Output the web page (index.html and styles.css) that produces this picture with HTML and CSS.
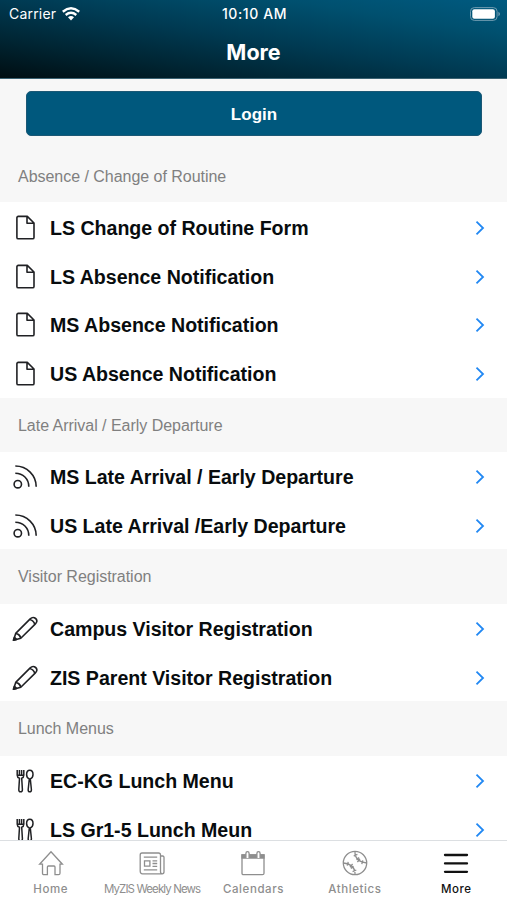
FILE: index.html
```html
<!DOCTYPE html>
<html lang="en">
<head>
    <meta charset="UTF-8">
    <meta name="viewport" content="width=device-width, initial-scale=1.0">
    <title>More</title>
    <link rel="stylesheet" href="styles.css">
</head>
<body>

    <!-- Shared icons -->
    <svg class="icon-defs" width="0" height="0">
        <symbol id="icon-file" viewBox="0 0 26 26">
            <path d="M6.3 1.4H15.3L22 8V22.4Q22 23.8 20.6 23.8H6.3Q4.9 23.8 4.9 22.4V2.8Q4.9 1.4 6.3 1.4Z M15 1.6V8.2H21.8"/>
        </symbol>
        <symbol id="icon-feed" viewBox="0 0 26 26">
            <circle cx="5.8" cy="20.2" r="3.7"/>
            <path d="M3.3 9.2C11 9.2 16.8 14.8 16.8 22.7M3.3 2C15 2 24.2 11.3 24.2 22.7"/>
        </symbol>
        <symbol id="icon-pencil" viewBox="0 0 26 26">
            <path d="M1.5 24.3L3.7 17.4L18.2 2.9Q20.2 1 22.4 1.8Q25 3 24.9 5.2Q24.7 6.6 23.4 7.9L8.8 22.2Z M3.7 17.4Q7.8 18.2 8.8 22.2M17.6 3.5Q21.8 4.4 22.8 8.5"/>
            <path class="solid" d="M1.5 24.3L2.4 21.3L4.5 23.4Z"/>
        </symbol>
        <symbol id="icon-food" viewBox="0 0 26 26">
            <path d="M5.2 2V7.2Q5.2 9.4 7.5 10.2L6.8 21.5Q6.7 23.8 8.6 23.8Q10.5 23.8 10.4 21.5L9.7 10.2Q11.8 9.4 11.8 7.2V2M7.4 2V7.7M9.6 2V7.7M5.2 7.3H11.8"/>
            <path d="M17.3 11Q14.6 9.8 14.6 6.5Q14.6 2.2 17.8 2.2Q21 2.2 21 6.5Q21 9.8 18.3 11L19.4 21.5Q19.5 23.8 17.8 23.8Q16 23.8 16.2 21.5Z"/>
        </symbol>
        <symbol id="icon-chevron" viewBox="0 0 10 16">
            <path d="M1.5 1.7L8 8L1.5 14.3"/>
        </symbol>
    </svg>

    <header class="header">
        <div class="status-bar">
            <div class="carrier">
                <span>Carrier</span>
                <svg class="wifi" viewBox="0 0 18 14">
                    <path d="M.8 4.7Q9-2 17.2 4.7M3.7 8Q9 3.7 14.3 8" fill="none" stroke="#fff" stroke-width="2.4"/>
                    <path d="M6 10.2Q9 7.8 12 10.2L9 13.5Z" fill="#fff"/>
                </svg>
            </div>
            <div class="time">10:10 AM</div>
            <svg class="battery" viewBox="0 0 30 14">
                <rect x=".5" y=".6" width="26.6" height="12.8" rx="3.8" fill="none" stroke="#6e9bb0"/>
                <rect x="2.3" y="2.3" width="22.6" height="9.4" rx="2" fill="#fff"/>
                <path d="M28.4 4.8Q30 5.6 30 7T28.4 9.2Z" fill="#6e9bb0"/>
            </svg>
        </div>
        <h1 class="title">More</h1>
    </header>

    <main class="content">
        <div class="login">
            <button class="login-button">Login</button>
        </div>

        <h2 class="section-title first">Absence / Change of Routine</h2>
        <a class="row"><svg class="icon"><use href="#icon-file"/></svg><span class="label">LS Change of Routine Form</span><svg class="chevron"><use href="#icon-chevron"/></svg></a>
        <a class="row"><svg class="icon"><use href="#icon-file"/></svg><span class="label">LS Absence Notification</span><svg class="chevron"><use href="#icon-chevron"/></svg></a>
        <a class="row"><svg class="icon"><use href="#icon-file"/></svg><span class="label">MS Absence Notification</span><svg class="chevron"><use href="#icon-chevron"/></svg></a>
        <a class="row"><svg class="icon"><use href="#icon-file"/></svg><span class="label">US Absence Notification</span><svg class="chevron"><use href="#icon-chevron"/></svg></a>

        <h2 class="section-title">Late Arrival / Early Departure</h2>
        <a class="row"><svg class="icon"><use href="#icon-feed"/></svg><span class="label">MS Late Arrival / Early Departure</span><svg class="chevron"><use href="#icon-chevron"/></svg></a>
        <a class="row"><svg class="icon"><use href="#icon-feed"/></svg><span class="label">US Late Arrival /Early Departure</span><svg class="chevron"><use href="#icon-chevron"/></svg></a>

        <h2 class="section-title">Visitor Registration</h2>
        <a class="row"><svg class="icon"><use href="#icon-pencil"/></svg><span class="label">Campus Visitor Registration</span><svg class="chevron"><use href="#icon-chevron"/></svg></a>
        <a class="row"><svg class="icon"><use href="#icon-pencil"/></svg><span class="label">ZIS Parent Visitor Registration</span><svg class="chevron"><use href="#icon-chevron"/></svg></a>

        <h2 class="section-title">Lunch Menus</h2>
        <a class="row"><svg class="icon food"><use href="#icon-food"/></svg><span class="label">EC-KG Lunch Menu</span><svg class="chevron"><use href="#icon-chevron"/></svg></a>
        <a class="row"><svg class="icon food"><use href="#icon-food"/></svg><span class="label">LS Gr1-5 Lunch Meun</span><svg class="chevron"><use href="#icon-chevron"/></svg></a>
    </main>

    <nav class="tabs">
        <a class="tab">
            <svg viewBox="0 0 26 26"><path d="M1.6 14.2L13 1.8L24.4 14.2H22V23.2Q22 24.7 20.5 24.7H17V17Q17 16 16 16H10.4Q9.4 16 9.4 17V24.7H6Q4.5 24.7 4.5 23.2V14.2Z"/></svg>
            <span>Home</span>
        </a>
        <a class="tab tight">
            <svg viewBox="0 0 26 26"><path d="M3 3H19.5Q21.5 3 21.5 5V21.5Q21.5 23.8 23.2 23.8Q25 23.8 25 21.8V7.5Q25 6 23.7 6H21.5M23.2 23.8H3.5Q1.2 23.8 1.2 21.3V5Q1.2 3 3 3M4.8 7.2H18.2M13.5 10.8H18.2M13.5 13.5H18.2M13.5 16.3H18.2M4.8 19.8H18.2M5.5 10.8H10.9V16.2H5.5Z"/></svg>
            <span>MyZIS Weekly News</span>
        </a>
        <a class="tab">
            <svg viewBox="0 0 26 26"><path d="M2 5H24V23.2Q24 24.7 22.4 24.7H3.6Q2 24.7 2 23.2Z"/><path d="M2 5H24V8H2Z" fill="#8e8e8e"/><path d="M5.9 8V3.4Q5.9 1.6 7.5 1.6T9.1 3.4V8M16.9 8V3.4Q16.9 1.6 18.5 1.6T20.1 3.4V8" fill="#fff"/></svg>
            <span>Calendars</span>
        </a>
        <a class="tab">
            <svg viewBox="0 0 26 26"><circle cx="13" cy="13" r="11.7"/><path d="M13 1.3Q12.5 11.5 24.7 13M1.3 13Q13.5 14.5 13 24.7M11.7 6L15.4 4.4M14.4 9.6L17.2 7.6M15.4 12L18 8.8M19.8 14.2L20.8 10.4M5.2 15.6L6.2 11.8M8 17.2L10.6 14M8.8 18.4L11.6 16.4M10.6 21.6L14.3 20"/></svg>
            <span>Athletics</span>
        </a>
        <a class="tab active">
            <svg viewBox="0 0 26 26"><path d="M2 5H24M2 13.4H24M2 21.8H24"/></svg>
            <span>More</span>
        </a>
    </nav>

</body>
</html>
```
FILE: styles.css
```css
* {
    box-sizing: border-box;
}

body {
    display: flex;
    flex-direction: column;
    height: 100vh;
    margin: 0;
    overflow: hidden;
    background-color: #fff;
    font-family: "Liberation Sans", Arial, sans-serif;
}

.icon-defs {
    position: absolute;
}

/* Header Styles */
.header {
    flex: none;
    height: 79px;
    color: #fff;
    background: linear-gradient(to bottom left, #005a80 0%, #00506f 22%, #003a52 50%, #002533 75%, #000e12 100%);
    border-bottom: 1px solid #3a6272;
    font-family: Inter, sans-serif;
}

.status-bar {
    display: grid;
    grid-template-columns: 1fr auto 1fr;
    align-items: center;
    height: 27px;
    padding: 0 7px 0 9px;
    font-size: 14px;
}

.carrier {
    display: flex;
    align-items: center;
    gap: 6px;
    letter-spacing: 0.2px;
}

.wifi {
    width: 18px;
    height: 14px;
}

.time {
    font-weight: 500;
    letter-spacing: 0.6px;
}

.battery {
    justify-self: end;
    width: 30px;
    height: 14px;
}

.title {
    margin: 0;
    font-size: 21.5px;
    line-height: 50px;
    font-weight: 700;
    text-align: center;
}

/* List Styles */
.content {
    flex: 1;
    min-height: 0;
    overflow: hidden;
}

.login {
    height: 71px;
    padding: 12px 25px 0 26px;
    background-color: #f7f7f7;
}

.login-button {
    display: block;
    width: 100%;
    height: 45px;
    padding: 2px 0 0;
    border: 1px solid #1b5875;
    border-radius: 5px;
    background-color: #00587d;
    color: #fff;
    font-family: inherit;
    font-size: 17px;
    font-weight: bold;
}

.section-title {
    height: 54.3px;
    margin: 0;
    padding-left: 18px;
    background-color: #f7f7f7;
    color: #808080;
    font-size: 16px;
    font-weight: normal;
    letter-spacing: -0.03px;
    line-height: 56px;
}

.section-title.first {
    height: 52.4px;
    line-height: 53px;
}

.row {
    display: flex;
    align-items: center;
    height: 48.8px;
    padding: 2px 22px 0 12px;
    color: #080c0e;
}

.icon {
    width: 26px;
    height: 26px;
    margin-right: 12px;
    fill: none;
    stroke: #202124;
    stroke-width: 1.6;
    stroke-linejoin: round;
}

.icon.food {
    stroke-width: 1.5;
}

.solid {
    fill: #202124;
}

.label {
    flex: 1;
    padding-top: 1px;
    font-size: 19.6px;
    font-weight: bold;
    letter-spacing: -0.02px;
    white-space: nowrap;
}

.chevron {
    width: 10px;
    height: 16px;
    fill: none;
    stroke: #2188f3;
    stroke-width: 1.8;
}

/* Tab Bar Styles */
.tabs {
    display: grid;
    flex: none;
    grid-template-columns: repeat(5, 1fr);
    height: 60px;
    border-top: 1px solid #dcdfe2;
    background-color: #fff;
    font-family: Inter, sans-serif;
}

.tab {
    display: flex;
    flex-direction: column;
    align-items: center;
    padding-top: 9px;
    color: #8e8e8e;
    font-size: 11.5px;
    font-weight: 500;
    letter-spacing: 0.6px;
    line-height: 14px;
    white-space: nowrap;
}

.tab svg {
    width: 26px;
    height: 26px;
    margin-bottom: 6px;
    fill: none;
    stroke: currentColor;
    stroke-width: 1.3;
}

.tab.tight {
    font-weight: 400;
    letter-spacing: -0.9px;
}

.tab.active {
    color: #111;
}

.tab.active svg {
    stroke-width: 2.3;
    stroke-linecap: round;
}
```
